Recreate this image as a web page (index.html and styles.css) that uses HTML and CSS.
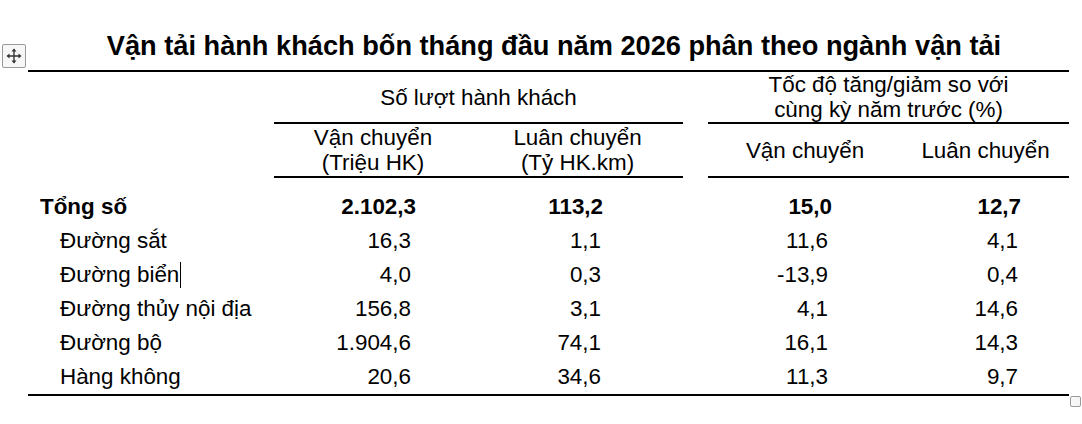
FILE: index.html
```html
<!DOCTYPE html>
<html lang="vi">
<head>
<meta charset="utf-8">
<title>Vận tải hành khách</title>
<link rel="stylesheet" href="styles.css">
</head>
<body>
<div class="page">
  <h1 class="title">Vận tải hành khách bốn tháng đầu năm 2026 phân theo ngành vận tải</h1>
  <div class="table-wrap">
    <span class="move-handle">
      <svg width="16" height="16" viewBox="0 0 15 15" aria-hidden="true">
        <path d="M7.5 1.5 V13.5 M1.5 7.5 H13.5" stroke="#333" stroke-width="1.3" fill="none"/>
        <path d="M7.5 0.5 L5.2 3.3 H9.8 Z M7.5 14.5 L5.2 11.7 H9.8 Z M0.5 7.5 L3.3 5.2 V9.8 Z M14.5 7.5 L11.7 5.2 V9.8 Z" fill="#333"/>
      </svg>
    </span>
    <table class="tbl">
      <colgroup>
        <col class="c-label">
        <col class="c-n1">
        <col class="c-n2">
        <col class="c-gap">
        <col class="c-n3">
        <col class="c-n4">
      </colgroup>
      <thead>
        <tr class="h1">
          <td rowspan="2"></td>
          <th colspan="2" class="rule">Số lượt hành khách</th>
          <td rowspan="2"></td>
          <th colspan="2" class="rule">Tốc độ tăng/giảm so với<br>cùng kỳ năm trước (%)</th>
        </tr>
        <tr class="h2">
          <th class="rule">Vận chuyển<br>(Triệu HK)</th>
          <th class="rule">Luân chuyển<br>(Tỷ HK.km)</th>
          <th class="rule">Vận chuyển</th>
          <th class="rule">Luân chuyển</th>
        </tr>
      </thead>
      <tbody>
        <tr class="total">
          <td class="label">Tổng số</td>
          <td class="n1">2.102,3</td>
          <td class="n2">113,2</td>
          <td></td>
          <td class="n3">15,0</td>
          <td class="n4">12,7</td>
        </tr>
        <tr>
          <td class="label sub">Đường sắt</td>
          <td class="n1">16,3</td>
          <td class="n2">1,1</td>
          <td></td>
          <td class="n3">11,6</td>
          <td class="n4">4,1</td>
        </tr>
        <tr>
          <td class="label sub">Đường biển<span class="caret"></span></td>
          <td class="n1">4,0</td>
          <td class="n2">0,3</td>
          <td></td>
          <td class="n3">-13,9</td>
          <td class="n4">0,4</td>
        </tr>
        <tr>
          <td class="label sub">Đường thủy nội địa</td>
          <td class="n1">156,8</td>
          <td class="n2">3,1</td>
          <td></td>
          <td class="n3">4,1</td>
          <td class="n4">14,6</td>
        </tr>
        <tr>
          <td class="label sub">Đường bộ</td>
          <td class="n1">1.904,6</td>
          <td class="n2">74,1</td>
          <td></td>
          <td class="n3">16,1</td>
          <td class="n4">14,3</td>
        </tr>
        <tr>
          <td class="label sub">Hàng không</td>
          <td class="n1">20,6</td>
          <td class="n2">34,6</td>
          <td></td>
          <td class="n3">11,3</td>
          <td class="n4">9,7</td>
        </tr>
      </tbody>
    </table>
    <span class="resize-handle"></span>
  </div>
</div>
</body>
</html>
```

FILE: styles.css
```css
* { box-sizing: border-box; }

html, body {
  margin: 0;
  padding: 0;
  background: #ffffff;
}

body {
  font-family: "Liberation Sans", Arial, sans-serif;
  color: #000000;
  width: 1082px;
  height: 424px;
  overflow: hidden;
}

.page {
  padding-left: 28px;
  width: 1069px;
}

.title {
  margin: 0;
  padding: 30px 0 0 11px;
  height: 70px;
  font-size: 27.2px;
  line-height: 32px;
  font-weight: bold;
  text-align: center;
  white-space: nowrap;
}

.table-wrap {
  position: relative;
  width: 1041px;
}

.move-handle {
  position: absolute;
  left: -26px;
  top: -26px;
  width: 24px;
  height: 24px;
  border: 1px solid #9a9a9a;
  border-radius: 2px;
  background: #f7f7f7;
  display: flex;
  align-items: center;
  justify-content: center;
}

.resize-handle {
  position: absolute;
  right: -12px;
  bottom: -11px;
  width: 11px;
  height: 11px;
  border: 1px solid #9a9a9a;
  border-radius: 2px;
  background: #f7f7f7;
}

.tbl {
  width: 1041px;
  table-layout: fixed;
  border-collapse: separate;
  border-spacing: 0;
  border-top: 2px solid #000;
  border-bottom: 2px solid #000;
  font-size: 22.4px;
}

.c-label { width: 246px; }
.c-n1 { width: 198px; }
.c-n2 { width: 211px; }
.c-gap { width: 25px; }
.c-n3 { width: 194px; }
.c-n4 { width: 167px; }

.tbl th,
.tbl td {
  padding: 0;
  white-space: nowrap;
}

.tbl th {
  font-weight: normal;
  text-align: center;
  vertical-align: middle;
  line-height: 25px;
}

.h1 th {
  height: 52px;
}

.h2 th {
  height: 54px;
  padding: 1px 0;
}

.tbl th.rule {
  border-bottom: 2px solid #000;
}

.tbl tbody td {
  line-height: 34px;
  height: 34px;
  text-align: right;
}

.tbl tbody tr.total td {
  padding-top: 12px;
  height: 46px;
  font-weight: bold;
}

.tbl td.label {
  text-align: left;
  padding-left: 12px;
}

.tbl td.label.sub {
  padding-left: 32px;
}

.tbl td.n1 { padding-right: 61px; }
.tbl td.n2 { padding-right: 82px; }
.tbl td.n3 { padding-right: 74px; }
.tbl td.n4 { padding-right: 51px; }

.tbl tr.total td.n1 { padding-right: 56px; }
.tbl tr.total td.n2 { padding-right: 80px; }
.tbl tr.total td.n3 { padding-right: 70px; }
.tbl tr.total td.n4 { padding-right: 48px; }

.caret {
  display: inline-block;
  width: 1px;
  height: 26px;
  background: #000;
  vertical-align: -6px;
  margin-left: 1px;
}
```
